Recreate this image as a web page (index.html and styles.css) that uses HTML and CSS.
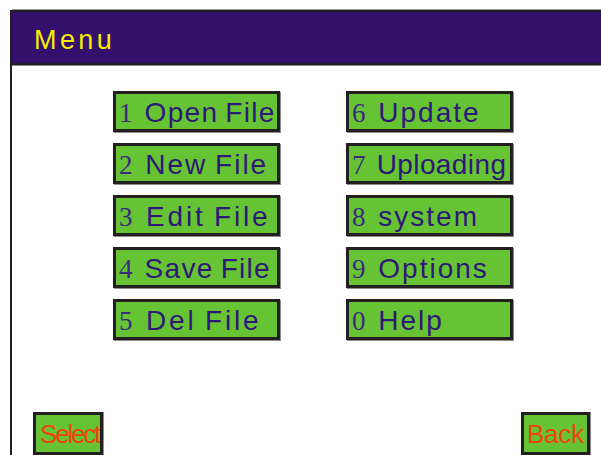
FILE: index.html
```html
<!DOCTYPE html>
<html lang="en">
<head>
<meta charset="utf-8">
<title>Menu</title>
<link rel="stylesheet" href="styles.css">
</head>
<body>
<div class="screen">
  <header class="title-bar">Menu</header>
  <main class="menu-grid">
    <div class="item item-snug"><span class="key">1</span> Open File</div>
    <div class="item"><span class="key">6</span> Update</div>
    <div class="item"><span class="key">2</span> New File</div>
    <div class="item item-tight"><span class="key">7</span> Uploading</div>
    <div class="item item-wide"><span class="key">3</span> Edit File</div>
    <div class="item"><span class="key">8</span> system</div>
    <div class="item item-snug"><span class="key">4</span> Save File</div>
    <div class="item"><span class="key">9</span> Options</div>
    <div class="item item-wide"><span class="key">5</span> Del File</div>
    <div class="item"><span class="key">0</span> Help</div>
  </main>
  <footer class="soft-keys">
    <div class="soft-key soft-key-left">Select</div>
    <div class="soft-key soft-key-right">Back</div>
  </footer>
</div>
</body>
</html>
```
FILE: styles.css
```css
html, body {
  margin: 0;
  padding: 0;
  background: #ffffff;
  overflow: hidden;
}

body {
  width: 601px;
  height: 455px;
}

.screen {
  box-sizing: border-box;
  margin: 10px 0 0 10px;
  height: 445px;
  border-left: 2px solid #231f20;
  display: flex;
  flex-direction: column;
  font-family: "Liberation Sans", Arial, sans-serif;
}

.title-bar {
  background: #34106c;
  border-top: 2px solid #231f20;
  border-bottom: 2px solid #231f20;
  box-shadow: 0 -1px 0 #9a9a9a, 0 1px 0 #8a8a8a;
  color: #f4ee00;
  font-size: 27px;
  letter-spacing: 3.4px;
  line-height: 47px;
  padding: 5px 0 0 22px;
  height: 46px;
}

.menu-grid {
  display: grid;
  grid-template-columns: 167px 167px;
  column-gap: 66px;
  row-gap: 11px;
  padding: 26px 0 0 101px;
}

/* menu entry: serif key digit followed by a spaced-out label */
.item {
  box-sizing: border-box;
  height: 41px;
  background: #66c334;
  border: 3px solid #231f20;
  box-shadow: 1px 1px 0 #8c8c8c;
  color: #2e1878;
  font-size: 28px;
  letter-spacing: 2px;
  word-spacing: -2px;
  line-height: 33px;
  padding: 2px 0 0 3px;
  white-space: nowrap;
  overflow: hidden;
}

.item-snug {
  letter-spacing: 1.3px;
}

.item-tight {
  letter-spacing: 0.4px;
}

.item-wide {
  letter-spacing: 2.8px;
}

.key {
  font-family: "Liberation Serif", "Times New Roman", serif;
  font-size: 27px;
  letter-spacing: 0;
  margin-right: 5px;
  color: #3a2a7e;
}

.soft-keys {
  margin-top: auto;
  display: flex;
  justify-content: space-between;
  padding: 0 11px 0 21px;
}

.soft-key {
  box-sizing: border-box;
  height: 43px;
  background: #66c334;
  border: 3px solid #231f20;
  box-shadow: 1px 0 0 #8c8c8c;
  color: #f2420e;
  font-size: 26px;
  line-height: 35px;
  padding-top: 2px;
  white-space: nowrap;
  overflow: hidden;
}

.soft-key-left {
  width: 70px;
  padding-left: 4px;
  letter-spacing: -2.2px;
}

.soft-key-right {
  width: 69px;
  padding-left: 3px;
  letter-spacing: -0.3px;
}
```
